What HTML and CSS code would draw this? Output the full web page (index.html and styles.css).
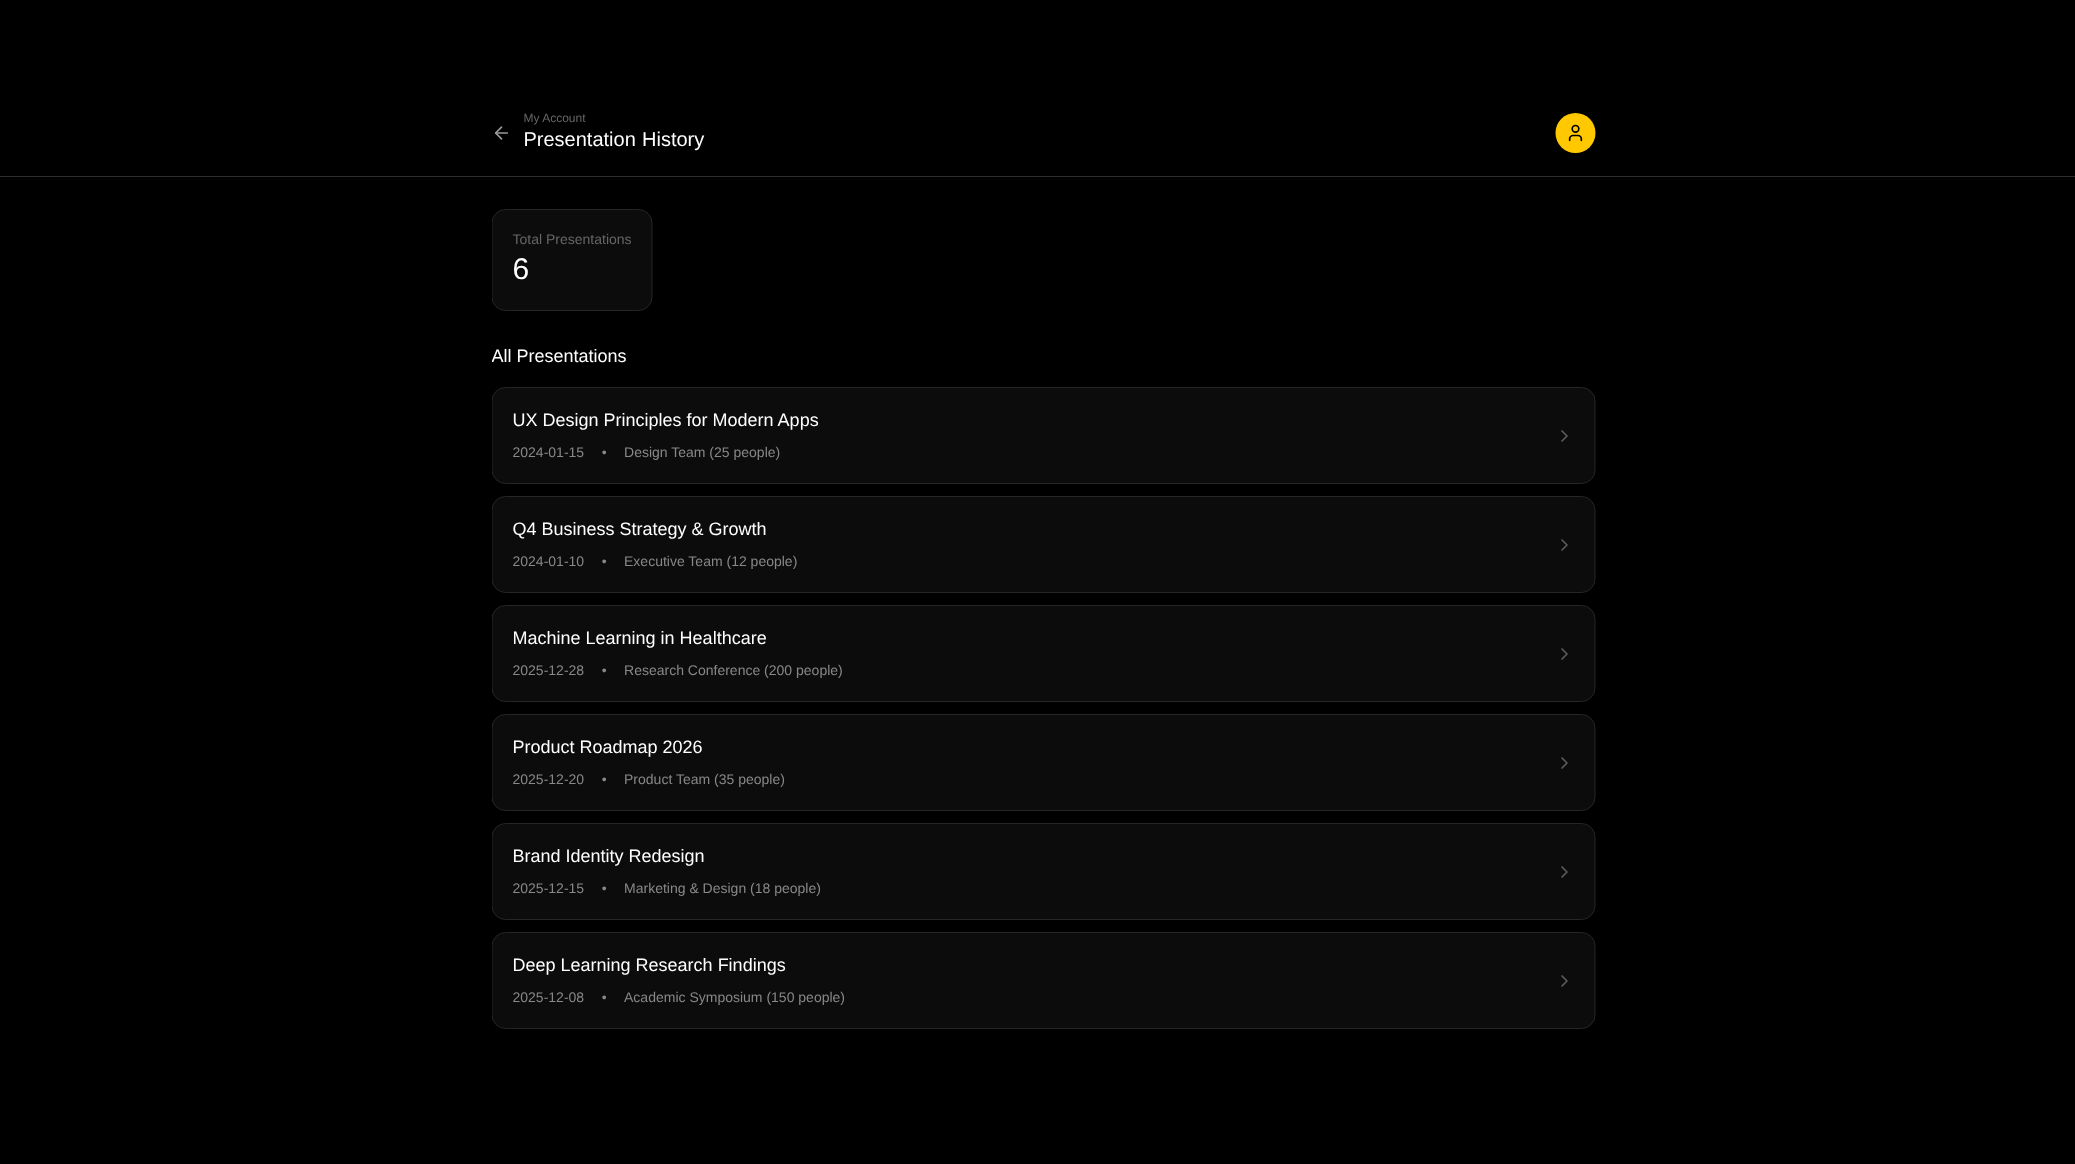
FILE: index.html
```html
<!DOCTYPE html>
<html lang="en">
<head>
<meta charset="utf-8">
<title>Presentation History</title>
<link rel="stylesheet" href="styles.css">
</head>
<body>
<header class="topbar">
  <div class="wrap topbar-row">
    <div class="topbar-left">
      <svg class="back" width="20" height="20" viewBox="0 0 24 24" fill="none" stroke="currentColor" stroke-width="2" stroke-linecap="round" stroke-linejoin="round"><path d="M19 12H5"/><path d="M12 19l-7-7 7-7"/></svg>
      <div class="titles">
        <div class="crumb">My Account</div>
        <h1 class="page-title">Presentation History</h1>
      </div>
    </div>
    <div class="avatar">
      <svg width="20" height="20" viewBox="0 0 24 24" fill="none" stroke="currentColor" stroke-width="2" stroke-linecap="round" stroke-linejoin="round"><path d="M19 21v-2a4 4 0 0 0-4-4H9a4 4 0 0 0-4 4v2"/><circle cx="12" cy="7" r="4"/></svg>
    </div>
  </div>
</header>
<main class="wrap content">
  <section class="stat">
    <div class="stat-label">Total Presentations</div>
    <div class="stat-value">6</div>
  </section>
  <h2 class="section-title">All Presentations</h2>
  <div class="list">
    <article class="item"><div><h3 class="item-title">UX Design Principles for Modern Apps</h3><div class="meta"><span>2024-01-15</span><span>•</span><span>Design Team (25 people)</span></div></div><svg class="chev" width="20" height="20" viewBox="0 0 24 24" fill="none" stroke="currentColor" stroke-width="2" stroke-linecap="round" stroke-linejoin="round"><path d="M9 18l6-6-6-6"/></svg></article>
    <article class="item"><div><h3 class="item-title">Q4 Business Strategy &amp; Growth</h3><div class="meta"><span>2024-01-10</span><span>•</span><span>Executive Team (12 people)</span></div></div><svg class="chev" width="20" height="20" viewBox="0 0 24 24" fill="none" stroke="currentColor" stroke-width="2" stroke-linecap="round" stroke-linejoin="round"><path d="M9 18l6-6-6-6"/></svg></article>
    <article class="item"><div><h3 class="item-title">Machine Learning in Healthcare</h3><div class="meta"><span>2025-12-28</span><span>•</span><span>Research Conference (200 people)</span></div></div><svg class="chev" width="20" height="20" viewBox="0 0 24 24" fill="none" stroke="currentColor" stroke-width="2" stroke-linecap="round" stroke-linejoin="round"><path d="M9 18l6-6-6-6"/></svg></article>
    <article class="item"><div><h3 class="item-title">Product Roadmap 2026</h3><div class="meta"><span>2025-12-20</span><span>•</span><span>Product Team (35 people)</span></div></div><svg class="chev" width="20" height="20" viewBox="0 0 24 24" fill="none" stroke="currentColor" stroke-width="2" stroke-linecap="round" stroke-linejoin="round"><path d="M9 18l6-6-6-6"/></svg></article>
    <article class="item"><div><h3 class="item-title">Brand Identity Redesign</h3><div class="meta"><span>2025-12-15</span><span>•</span><span>Marketing &amp; Design (18 people)</span></div></div><svg class="chev" width="20" height="20" viewBox="0 0 24 24" fill="none" stroke="currentColor" stroke-width="2" stroke-linecap="round" stroke-linejoin="round"><path d="M9 18l6-6-6-6"/></svg></article>
    <article class="item"><div><h3 class="item-title">Deep Learning Research Findings</h3><div class="meta"><span>2025-12-08</span><span>•</span><span>Academic Symposium (150 people)</span></div></div><svg class="chev" width="20" height="20" viewBox="0 0 24 24" fill="none" stroke="currentColor" stroke-width="2" stroke-linecap="round" stroke-linejoin="round"><path d="M9 18l6-6-6-6"/></svg></article>
  </div>
</main>
</body>
</html>
```
FILE: styles.css
```css
* { box-sizing: border-box; }
html, body { margin: 0; padding: 0; }
body {
  background: #000;
  color: #fff;
  font-family: "Liberation Sans", Arial, sans-serif;
  text-rendering: geometricPrecision;
  min-height: 1164px;
}
.wrap { width: 1104px; margin-left: 492px; will-change: transform; transform: translateX(-0.5px); }
.topbar { border-bottom: 1px solid #2e2e2e; padding-top: 113px; padding-bottom: 23px; }
.topbar-row { display: flex; align-items: center; justify-content: space-between; }
.topbar-left { display: flex; align-items: center; gap: 12px; }
.back { color: #999; display: block; }
.titles { margin-top: -4px; }
.crumb { font-size: 12px; line-height: 16px; margin-bottom: 1px; color: #666; }
.page-title { margin: 0; font-size: 20px; line-height: 26px; font-weight: 400; word-spacing: 0.7px; color: #fff; }
.avatar { width: 40px; height: 40px; border-radius: 50%; background: #ffc800; color: #000; display: flex; align-items: center; justify-content: center; }
.content { padding-top: 32px; }
.stat { display: inline-block; padding: 19px 20px; background: #0c0c0c; border: 1px solid #262626; border-radius: 14px; vertical-align: top; height: 102px; }
.stat-label { font-size: 14px; line-height: 20px; margin-bottom: 3px; color: #666; }
.stat-value { font-size: 30px; line-height: 36px; color: #fff; }
.section-title { margin: 31px 0 17px; font-size: 18px; line-height: 28px; font-weight: 400; }
.list { display: flex; flex-direction: column; gap: 12px; }
.item { display: flex; align-items: center; justify-content: space-between; height: 97px; padding: 18px 20px 22px; background: #0c0c0c; border: 1px solid #262626; border-radius: 14px; }
.item-title { margin: 0 0 8px; font-size: 18px; line-height: 28px; font-weight: 400; color: #fff; }
.meta { display: flex; gap: 17.5px; font-size: 14px; line-height: 20px; color: #888; }
.chev { color: #5c5c5c; display: block; margin-top: 4px; }
```
